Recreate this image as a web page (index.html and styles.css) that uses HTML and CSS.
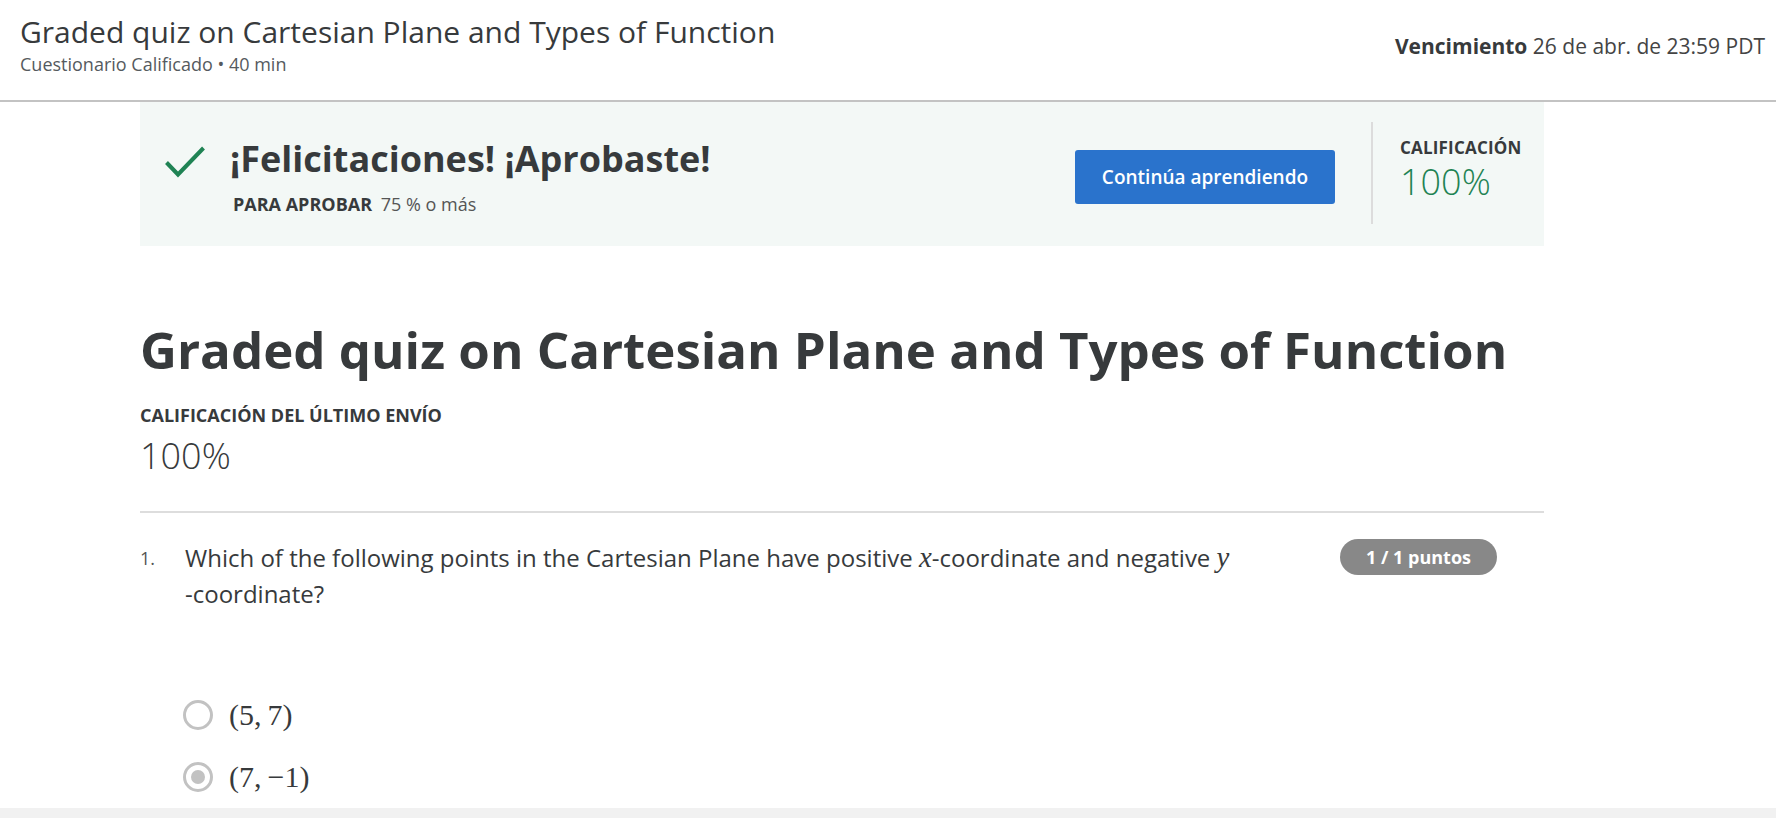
FILE: index.html
```html
<!DOCTYPE html>
<html lang="es">
<head>
<meta charset="utf-8">
<title>Graded quiz on Cartesian Plane and Types of Function</title>
<link rel="stylesheet" href="styles.css">
</head>
<body>
<header class="topbar">
  <div class="topbar-left">
    <h1 class="topbar-title">Graded quiz on Cartesian Plane and Types of Function</h1>
    <div class="topbar-sub">Cuestionario Calificado • 40 min</div>
  </div>
  <div class="topbar-due"><strong>Vencimiento</strong> 26 de abr. de 23:59 PDT</div>
</header>

<main class="content">
  <section class="banner">
    <div class="pass">
      <svg class="pass-icon" width="40" height="32" viewBox="0 0 40 32" aria-hidden="true">
        <polyline points="1.5,16.5 13,28.5 38.5,2" fill="none" stroke="#1f8354" stroke-width="4"/>
      </svg>
      <div class="pass-text">
        <div class="pass-title">¡Felicitaciones! ¡Aprobaste!</div>
        <div class="pass-req"><span class="pass-req-label">PARA APROBAR</span> 75 % o más</div>
      </div>
    </div>
    <button class="btn-continue">Continúa aprendiendo</button>
    <div class="banner-divider"></div>
    <div class="banner-grade">
      <div class="banner-grade-label">CALIFICACIÓN</div>
      <div class="banner-grade-value">100%</div>
    </div>
  </section>

  <h2 class="quiz-title">Graded quiz on Cartesian Plane and Types of Function</h2>
  <div class="last-label">CALIFICACIÓN DEL ÚLTIMO ENVÍO</div>
  <div class="last-value">100%</div>
  <hr class="rule">

  <section class="question">
    <div class="q-num">1.</div>
    <div class="q-body">
      <p class="q-text">Which of the following points in the Cartesian Plane have positive <span class="mi">x</span>-coordinate and negative <span class="mi">y</span><br>-coordinate?</p>
      <div class="options">
        <div class="option">
          <span class="radio"></span>
          <span class="math">(5,&thinsp;7)</span>
        </div>
        <div class="option">
          <span class="radio radio-checked"></span>
          <span class="math">(7,&thinsp;−1)</span>
        </div>
      </div>
    </div>
    <div class="q-points">1 / 1 puntos</div>
  </section>
</main>
<div class="scrollbar"></div>
</body>
</html>
```

FILE: styles.css
```css
* { box-sizing: border-box; }
html, body { margin: 0; padding: 0; }
body {
  font-family: "Open Sans", "Noto Sans", sans-serif;
  color: #373a3c;
  background: #ffffff;
  width: 1776px;
  height: 818px;
  overflow: hidden;
}

.topbar {
  display: flex;
  justify-content: space-between;
  align-items: flex-start;
  height: 102px;
  padding: 12px 11px 0 20px;
  border-bottom: 2px solid #c3c3c3;
}
.topbar-title {
  margin: 0;
  font-size: 30px;
  font-weight: 400;
  line-height: 40px;
  color: #373a3c;
}
.topbar-sub {
  font-size: 18px;
  line-height: 24px;
  color: #555a5e;
  margin-top: 0;
}
.topbar-due {
  margin-top: 20px;
  font-size: 21px;
  line-height: 28px;
  color: #444;
}
.topbar-due strong { font-weight: 700; color: #373a3c; }

.content {
  width: 1404px;
  margin-left: 140px;
}

.banner {
  display: flex;
  align-items: flex-start;
  height: 144px;
  background: #f3f8f6;
  padding: 0 19px 0 25px;
}
.pass {
  flex: 1;
  display: flex;
  align-items: flex-start;
  gap: 25px;
  margin-top: 33px;
}
.pass-icon { margin-top: 11px; flex: none; }
.pass-title {
  font-size: 36px;
  font-weight: 700;
  line-height: 48px;
  color: #373a3c;
}
.pass-req {
  margin-top: 9px;
  font-size: 18px;
  line-height: 24px;
  color: #555;
  padding-left: 3px;
}
.pass-req-label {
  font-weight: 700;
  color: #373a3c;
  margin-right: 4px;
}
.btn-continue {
  flex: none;
  width: 260px;
  height: 54px;
  margin-top: 48px;
  margin-right: 36px;
  border: none;
  border-radius: 3px;
  background: #2a73cc;
  color: #ffffff;
  font-family: "Open Sans", "Noto Sans", sans-serif;
  font-size: 19px;
  font-weight: 600;
}
.banner-divider {
  flex: none;
  width: 2px;
  height: 102px;
  margin-top: 20px;
  margin-right: 27px;
  background: #dcdcdc;
}
.banner-grade {
  flex: none;
  width: 125px;
  margin-top: 35px;
}
.banner-grade-label {
  font-size: 17px;
  font-weight: 700;
  line-height: 22px;
  letter-spacing: 0.2px;
  color: #373a3c;
}
.banner-grade-value {
  font-size: 36px;
  font-weight: 300;
  line-height: 48px;
  margin-top: -1px;
  color: #1f8354;
}

.quiz-title {
  margin: 70px 0 0 0;
  font-size: 51px;
  font-weight: 700;
  line-height: 66px;
  color: #373a3c;
}
.last-label {
  margin-top: 21px;
  font-size: 18px;
  font-weight: 700;
  line-height: 24px;
  color: #373a3c;
}
.last-value {
  margin-top: 6px;
  font-size: 36px;
  font-weight: 300;
  line-height: 46px;
  color: #373a3c;
}
.rule {
  margin: 32px 0 0 0;
  border: none;
  height: 2px;
  background: #dddddd;
}

.question {
  display: flex;
  align-items: flex-start;
  margin-top: 27px;
}
.q-num {
  width: 45px;
  flex: none;
  font-size: 18px;
  line-height: 36px;
  color: #555;
}
.q-body { flex: 1; }
.q-text {
  margin: 0;
  font-size: 24px;
  line-height: 36px;
  color: #373a3c;
}
.mi {
  font-family: "Liberation Serif", "DejaVu Serif", serif;
  font-style: italic;
  font-size: 1.2em;
  line-height: 1;
}
.q-points {
  flex: none;
  margin-top: -1px;
  margin-right: 47px;
  height: 36px;
  width: 157px;
  text-align: center;
  border-radius: 18px;
  background: #888888;
  color: #ffffff;
  font-size: 18px;
  font-weight: 700;
  line-height: 36px;
}

.options {
  margin-top: 88px;
  display: flex;
  flex-direction: column;
  gap: 32px;
}
.option {
  display: flex;
  align-items: center;
  gap: 16px;
  height: 30px;
}
.radio {
  flex: none;
  width: 30px;
  height: 30px;
  margin-left: -2px;
  border: 3px solid #c2c2c2;
  border-radius: 50%;
  display: flex;
  align-items: center;
  justify-content: center;
}
.radio-checked::after {
  content: "";
  width: 14px;
  height: 14px;
  border-radius: 50%;
  background: #c2c2c2;
}
.math {
  font-family: "Liberation Serif", "DejaVu Serif", serif;
  font-size: 30px;
  line-height: 30px;
  color: #373a3c;
}

.scrollbar {
  position: fixed;
  left: 0;
  right: 0;
  bottom: 0;
  height: 10px;
  background: #f1f1f1;
}
```
